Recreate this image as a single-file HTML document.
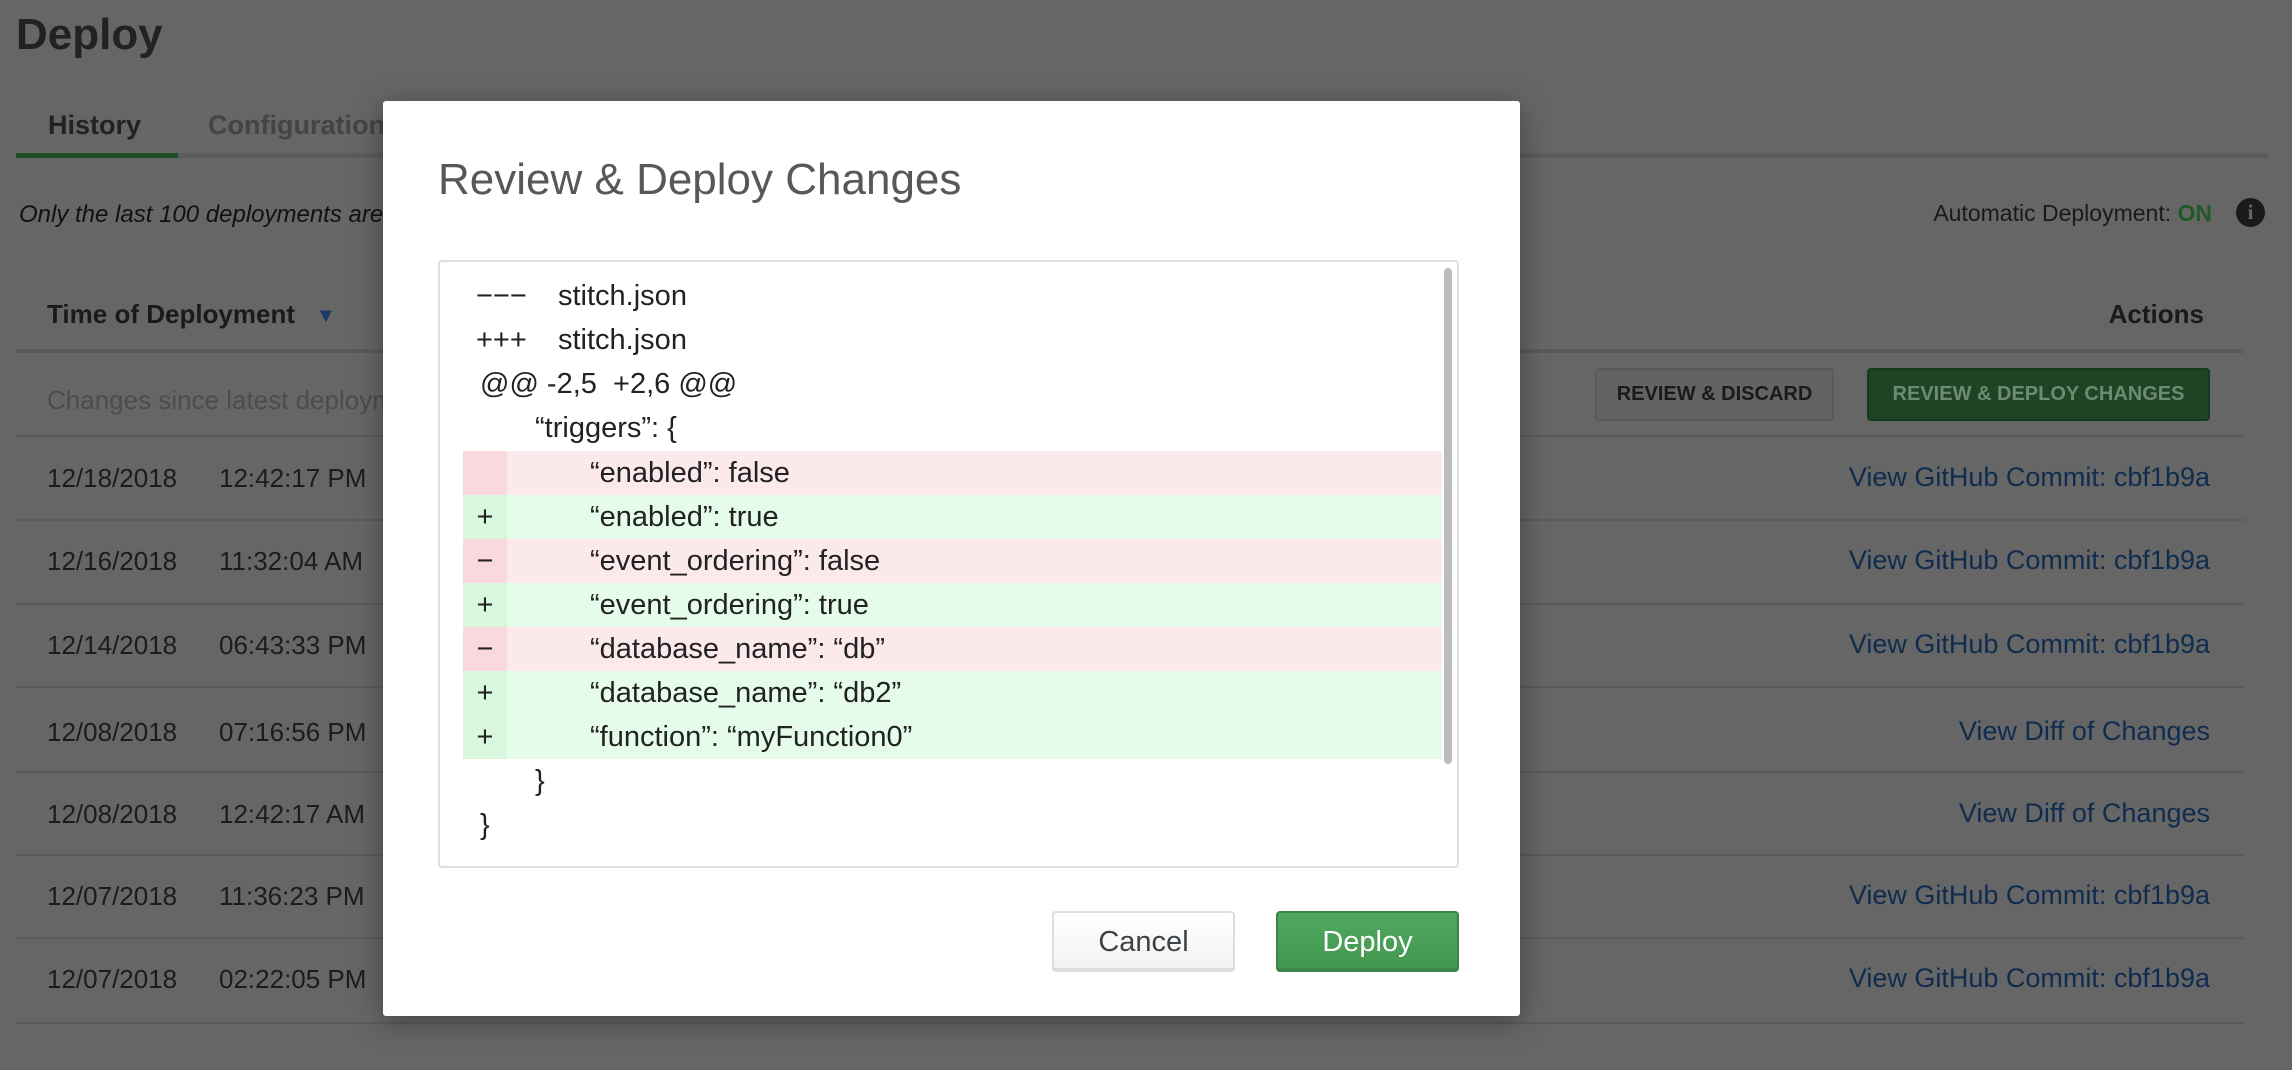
<!DOCTYPE html>
<html><head><meta charset="utf-8"><style>
*{margin:0;padding:0;box-sizing:border-box}
body{width:2292px;height:1070px;background:#666;position:relative;overflow:hidden;font-family:"Liberation Sans",sans-serif;color:#1c1c1c}
.a{position:absolute;white-space:nowrap}
.hl{position:absolute;left:16px;width:2228px;height:2px;background:#5b5b5b}
.row{font-size:26px;line-height:30px;left:47px;width:400px}
.row i{font-style:normal;position:absolute;left:172px}
.lnk{color:#0f2c4f;right:82px;font-size:27px}
.modal{position:absolute;left:383px;top:101px;width:1137px;height:915px;background:#fff;border-radius:3px;box-shadow:0 6px 30px rgba(0,0,0,.35)}
.diff{position:absolute;left:55px;top:159px;width:1021px;height:608px;border:2px solid #dedede;border-radius:4px}
.ln{position:absolute;left:0;width:1000px;height:44px;font-size:29px;line-height:44px;color:#222}
.ln span{position:absolute}
.del{background:#fce9ec}.add{background:#e6fcea}
.del .m{background:#f9d9de}.add .m{background:#d8f7dd}
.m{position:absolute;left:23px;width:44px;height:44px;text-align:center}
.btn{position:absolute;height:61px;border-radius:4px;font-size:29px;text-align:center;line-height:58px}
</style></head><body>
<div class="a" style="left:16px;top:10px;font-size:44px;font-weight:bold;color:#222">Deploy</div>
<div class="a" style="left:48px;top:110px;font-size:27px;font-weight:bold;color:#222">History</div>
<div class="a" style="left:208px;top:110px;font-size:27px;font-weight:bold;color:#444">Configuration</div>
<div class="a" style="left:16px;top:153px;width:2252px;height:5px;background:#5c5c5c"></div>
<div class="a" style="left:16px;top:153px;width:162px;height:5px;background:#1e4d26"></div>
<div class="a" style="left:19px;top:201px;font-size:24px;font-style:italic;color:#111">Only the last 100 deployments are shown</div>
<div class="a" style="right:80px;top:200px;font-size:23px;color:#1a1a1a">Automatic Deployment: <b style="color:#1e5a26">ON</b></div>
<div class="a" style="left:2236px;top:198px;width:29px;height:29px;border-radius:50%;background:#1a1a1a;color:#666;font:bold 21px/29px 'Liberation Serif',serif;text-align:center">i</div>
<div class="a" style="left:47px;top:299px;font-size:26px;font-weight:bold;color:#1a1a1a">Time of Deployment</div>
<div class="a" style="left:316px;top:305px;font-size:20px;color:#173a66">▼</div>
<div class="a" style="right:88px;top:299px;font-size:26px;font-weight:bold;color:#1a1a1a">Actions</div>
<div class="a" style="left:16px;top:349px;width:2228px;height:4px;background:#5a5a5a"></div>
<div class="a" style="left:47px;top:385px;font-size:26px;color:#4c4c4c">Changes since latest deployment</div>
<div class="a" style="left:1595px;top:368px;width:239px;height:53px;border:2px solid #5a5a5a;border-radius:4px;background:#636363;font-size:20px;font-weight:bold;line-height:49px;text-align:center;color:#1a1a1a">REVIEW &amp; DISCARD</div>
<div class="a" style="left:1867px;top:368px;width:343px;height:53px;border:2px solid #173a1e;border-radius:4px;background:#1d4524;font-size:20px;font-weight:bold;line-height:49px;text-align:center;color:#6f8a73">REVIEW &amp; DEPLOY CHANGES</div>
<div class="hl" style="top:435px"></div>
<div class="hl" style="top:519px"></div>
<div class="hl" style="top:603px"></div>
<div class="hl" style="top:686px"></div>
<div class="hl" style="top:771px"></div>
<div class="hl" style="top:854px"></div>
<div class="hl" style="top:937px"></div>
<div class="hl" style="top:1022px"></div>
<div class="a row" style="top:463px">12/18/2018<i>12:42:17 PM</i></div>
<div class="a row" style="top:546px">12/16/2018<i>11:32:04 AM</i></div>
<div class="a row" style="top:630px">12/14/2018<i>06:43:33 PM</i></div>
<div class="a row" style="top:717px">12/08/2018<i>07:16:56 PM</i></div>
<div class="a row" style="top:799px">12/08/2018<i>12:42:17 AM</i></div>
<div class="a row" style="top:881px">12/07/2018<i>11:36:23 PM</i></div>
<div class="a row" style="top:964px">12/07/2018<i>02:22:05 PM</i></div>
<div class="a lnk" style="top:462px">View GitHub Commit: cbf1b9a</div>
<div class="a lnk" style="top:545px">View GitHub Commit: cbf1b9a</div>
<div class="a lnk" style="top:629px">View GitHub Commit: cbf1b9a</div>
<div class="a lnk" style="top:716px">View Diff of Changes</div>
<div class="a lnk" style="top:798px">View Diff of Changes</div>
<div class="a lnk" style="top:880px">View GitHub Commit: cbf1b9a</div>
<div class="a lnk" style="top:963px">View GitHub Commit: cbf1b9a</div>

<div class="modal">
 <div class="a" style="left:55px;top:54px;font-size:44px;color:#55595c">Review &amp; Deploy Changes</div>
 <div class="diff">
  <div class="ln" style="top:12px"><span style="left:36px">−−−</span><span style="left:118px">stitch.json</span></div>
  <div class="ln" style="top:56px"><span style="left:36px">+++</span><span style="left:118px">stitch.json</span></div>
  <div class="ln" style="top:100px"><span style="left:40px">@@ -2,5 &nbsp;+2,6 @@</span></div>
  <div class="ln" style="top:144px"><span style="left:95px">“triggers”: {</span></div>
  <div class="ln del" style="top:189px;left:23px;width:979px"><div class="m" style="left:0"></div><span style="left:127px">“enabled”: false</span></div>
  <div class="ln add" style="top:233px;left:23px;width:979px"><div class="m" style="left:0">+</div><span style="left:127px">“enabled”: true</span></div>
  <div class="ln del" style="top:277px;left:23px;width:979px"><div class="m" style="left:0">−</div><span style="left:127px">“event_ordering”: false</span></div>
  <div class="ln add" style="top:321px;left:23px;width:979px"><div class="m" style="left:0">+</div><span style="left:127px">“event_ordering”: true</span></div>
  <div class="ln del" style="top:365px;left:23px;width:979px"><div class="m" style="left:0">−</div><span style="left:127px">“database_name”: “db”</span></div>
  <div class="ln add" style="top:409px;left:23px;width:979px"><div class="m" style="left:0">+</div><span style="left:127px">“database_name”: “db2”</span></div>
  <div class="ln add" style="top:453px;left:23px;width:979px"><div class="m" style="left:0">+</div><span style="left:127px">“function”: “myFunction0”</span></div>
  <div class="ln" style="top:497px"><span style="left:95px">}</span></div>
  <div class="ln" style="top:541px"><span style="left:40px">}</span></div>
  <div class="a" style="left:1004px;top:6px;width:8px;height:496px;border-radius:4px;background:#bcbcbc"></div>
 </div>
 <div class="btn" style="left:669px;top:810px;width:183px;border:2px solid #ddd;border-bottom-width:4px;background:linear-gradient(#fff,#f3f3f3);color:#3d4246">Cancel</div>
 <div class="btn" style="left:893px;top:810px;width:183px;border:2px solid #3c8447;border-bottom-width:4px;background:linear-gradient(#4fa85e,#45974f);color:#fff">Deploy</div>
</div>
</body></html>
